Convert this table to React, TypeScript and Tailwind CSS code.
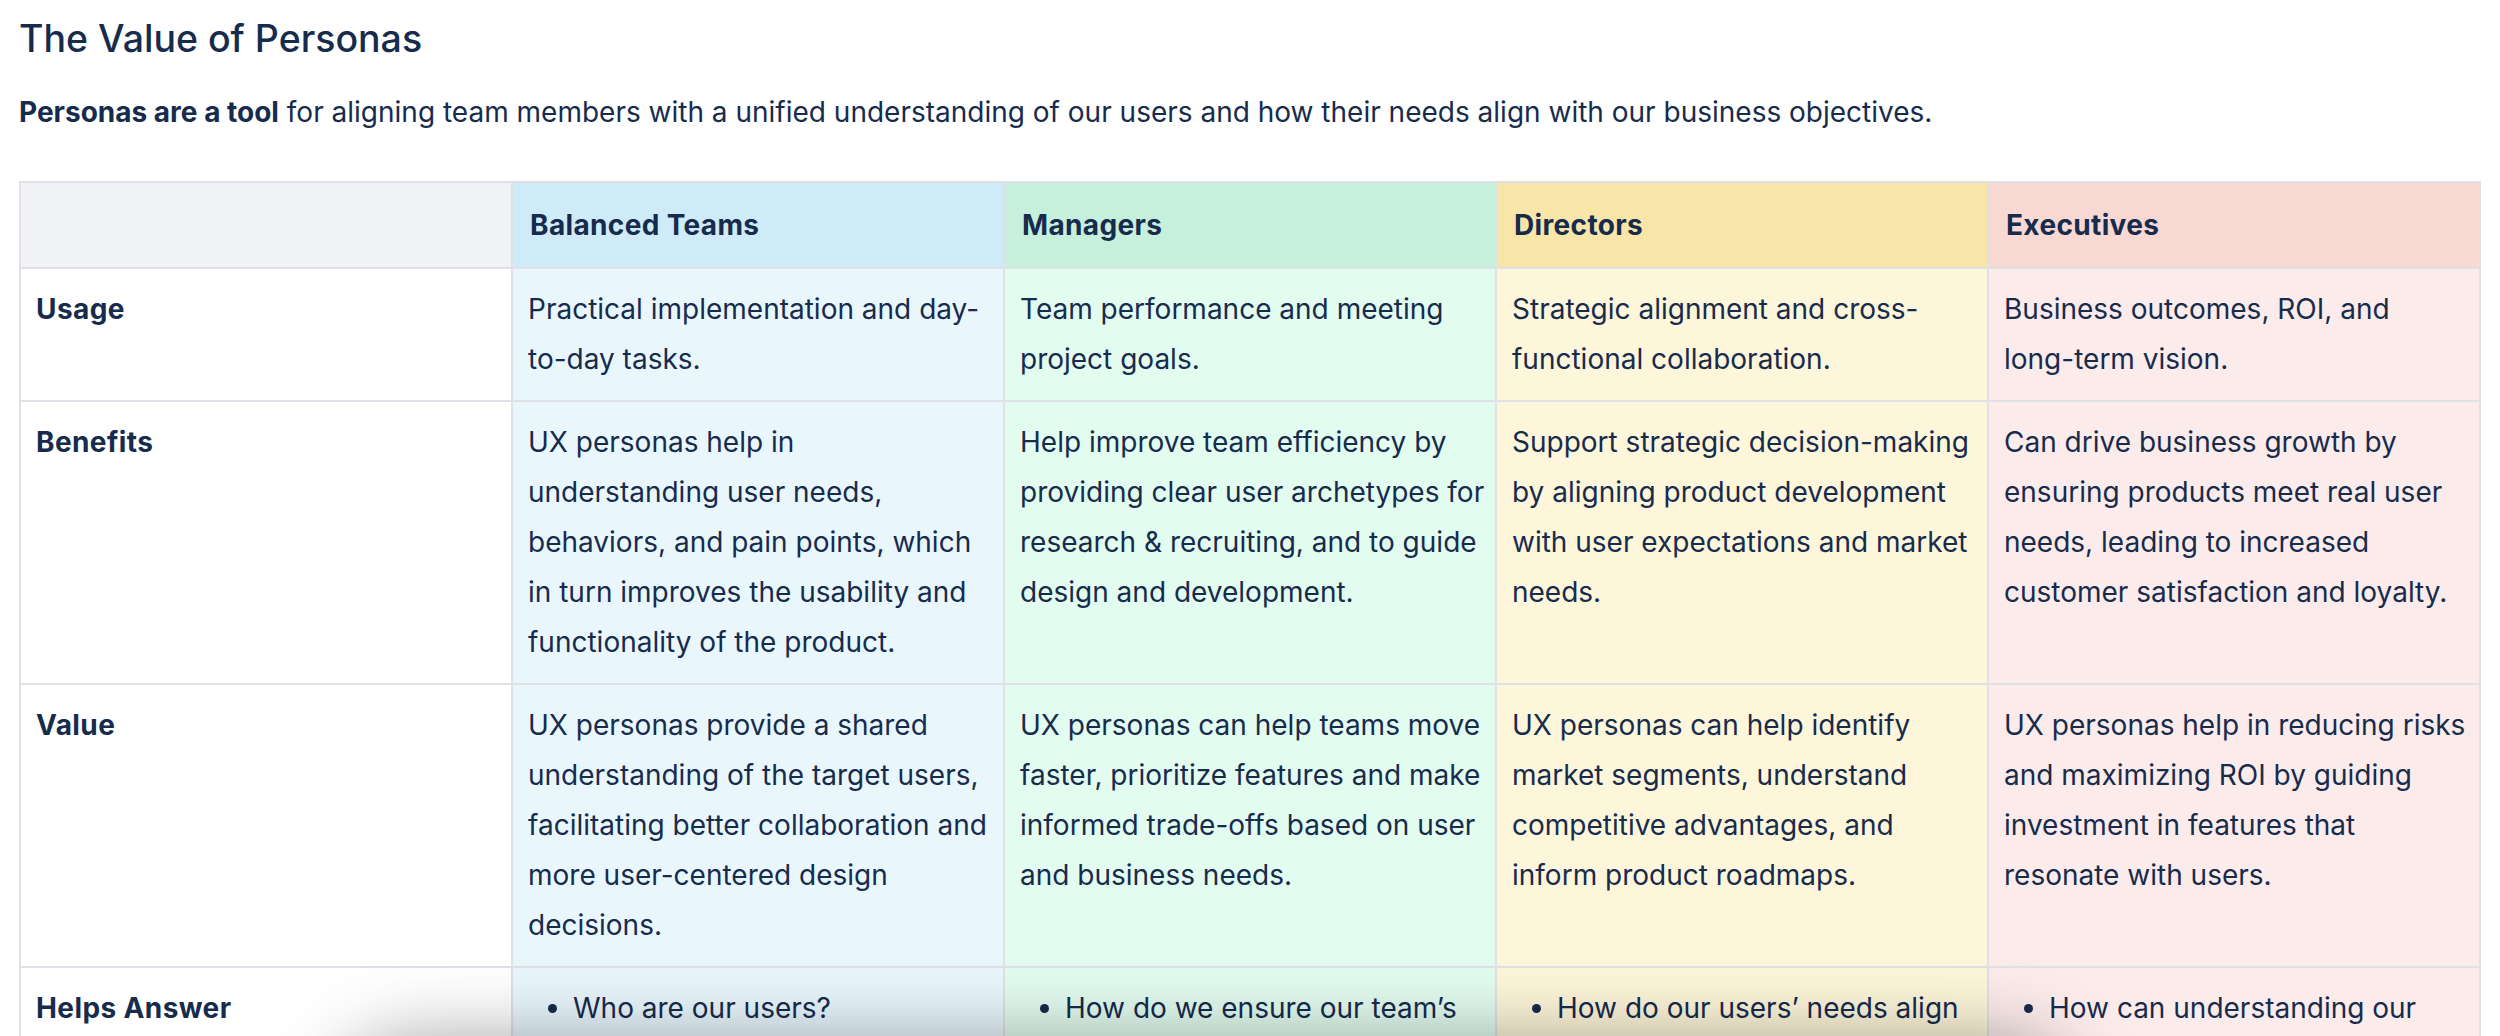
import React from "react";

type Col = { name: string; head: string; body: string };

const cols: Col[] = [
  { name: "Balanced Teams", head: "bg-[#CFEBF8]", body: "bg-[#E9F7FD]" },
  { name: "Managers", head: "bg-[#C6EFDC]", body: "bg-[#E3FCF0]" },
  { name: "Directors", head: "bg-[#F8E5A8]", body: "bg-[#FEF6DA]" },
  { name: "Executives", head: "bg-[#F8D8D3]", body: "bg-[#FCEBEB]" },
];

const rows: { label: string; cells: string[][] }[] = [
  {
    label: "Usage",
    cells: [
      ["Practical implementation and day-", "to-day tasks."],
      ["Team performance and meeting", "project goals."],
      ["Strategic alignment and cross-", "functional collaboration."],
      ["Business outcomes, ROI, and", "long-term vision."],
    ],
  },
  {
    label: "Benefits",
    cells: [
      [
        "UX personas help in",
        "understanding user needs,",
        "behaviors, and pain points, which",
        "in turn improves the usability and",
        "functionality of the product.",
      ],
      [
        "Help improve team efficiency by",
        "providing clear user archetypes for",
        "research & recruiting, and to guide",
        "design and development.",
      ],
      [
        "Support strategic decision-making",
        "by aligning product development",
        "with user expectations and market",
        "needs.",
      ],
      [
        "Can drive business growth by",
        "ensuring products meet real user",
        "needs, leading to increased",
        "customer satisfaction and loyalty.",
      ],
    ],
  },
  {
    label: "Value",
    cells: [
      [
        "UX personas provide a shared",
        "understanding of the target users,",
        "facilitating better collaboration and",
        "more user-centered design",
        "decisions.",
      ],
      [
        "UX personas can help teams move",
        "faster, prioritize features and make",
        "informed trade-offs based on user",
        "and business needs.",
      ],
      [
        "UX personas can help identify",
        "market segments, understand",
        "competitive advantages, and",
        "inform product roadmaps.",
      ],
      [
        "UX personas help in reducing risks",
        "and maximizing ROI by guiding",
        "investment in features that",
        "resonate with users.",
      ],
    ],
  },
];

const helps: string[][] = [
  ["Who are our users?", "What are their goals and pain points?", "How do they use our product day to day?"],
  ["How do we ensure our team’s work stays focused on real user needs?", "Which features should we prioritize next?"],
  ["How do our users’ needs align with our product strategy?", "Where are the gaps in our market coverage?"],
  ["How can understanding our users drive business growth?", "Where should we invest for the best return?"],
];

export default function App() {
  return (
    <div className="min-h-screen bg-white font-['Inter',sans-serif] text-[#172B4D] pl-[19px] pr-[19px]">
      <h2 className="pt-[16px] text-[37.5px] font-medium leading-[46px]">The Value of Personas</h2>
      <p className="mt-[25px] text-[28px] leading-[50px]">
        <strong className="font-bold">Personas are a tool</strong> for aligning team members with a unified
        understanding of our users and how their needs align with our business objectives.
      </p>

      <table className="mt-[44px] w-[2462px] table-fixed border-separate border-spacing-0 border-l-2 border-t-2 border-[#DFE1E6] text-[28px] leading-[50px]">
        <thead>
          <tr>
            <th className="w-1/5 bg-[#F1F2F4] border-r-2 border-b-2 border-[#DFE1E6] pl-[17px] pr-[12px] pt-[17px] pb-[17px] text-left align-top font-bold tracking-[0.35px]"></th>
            {cols.map((c) => (
              <th
                key={c.name}
                className={`w-1/5 ${c.head} border-r-2 border-b-2 border-[#DFE1E6] pl-[17px] pr-[12px] pt-[17px] pb-[17px] text-left align-top font-bold tracking-[0.35px]`}
              >
                {c.name}
              </th>
            ))}
          </tr>
        </thead>
        <tbody>
          {rows.map((r) => (
            <tr key={r.label}>
              <th className="bg-white border-r-2 border-b-2 border-[#DFE1E6] pl-[15px] pr-[12px] pt-[15px] pb-[16px] text-left align-top font-bold tracking-[0.4px]">
                {r.label}
              </th>
              {r.cells.map((lines, i) => (
                <td
                  key={i}
                  className={`${cols[i].body} border-r-2 border-b-2 border-[#DFE1E6] pl-[15px] pr-[10px] pt-[15px] pb-[16px] align-top`}
                >
                  {lines.map((l, j) => (
                    <span key={j} className="block whitespace-nowrap">
                      {l}
                    </span>
                  ))}
                </td>
              ))}
            </tr>
          ))}
          <tr>
            <th className="bg-white border-r-2 border-b-2 border-[#DFE1E6] pl-[15px] pr-[12px] pt-[15px] pb-[16px] text-left align-top font-bold tracking-[0.4px]">
              Helps Answer
            </th>
            {helps.map((items, i) => (
              <td
                key={i}
                className={`${cols[i].body} border-r-2 border-b-2 border-[#DFE1E6] pl-[15px] pr-[10px] pt-[15px] pb-[16px] align-top`}
              >
                <ul className="list-disc pl-[45px]">
                  {items.map((it) => (
                    <li key={it}>{it}</li>
                  ))}
                </ul>
              </td>
            ))}
          </tr>
        </tbody>
      </table>
      <div className="h-[80px]"></div>

      <div className="pointer-events-none fixed left-[340px] right-[430px] top-[1045px] h-[200px] rounded-[70px] bg-[#d9d9d9] shadow-[0_0_80px_0_rgba(0,0,0,0.42)]"></div>
    </div>
  );
}
